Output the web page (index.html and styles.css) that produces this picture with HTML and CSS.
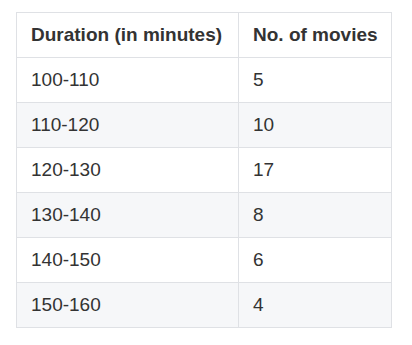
FILE: index.html
```html
<!DOCTYPE html>
<html>
<head>
<meta charset="utf-8">
<link rel="stylesheet" href="styles.css">
</head>
<body>
<table class="data">
  <thead>
    <tr><th>Duration (in minutes)</th><th>No. of movies</th></tr>
  </thead>
  <tbody>
    <tr><td>100-110</td><td>5</td></tr>
    <tr><td>110-120</td><td>10</td></tr>
    <tr><td>120-130</td><td>17</td></tr>
    <tr><td>130-140</td><td>8</td></tr>
    <tr><td>140-150</td><td>6</td></tr>
    <tr><td>150-160</td><td>4</td></tr>
  </tbody>
</table>
</body>
</html>
```
FILE: styles.css
```css
html, body {
  margin: 0;
  padding: 0;
  background: #ffffff;
}
body {
  padding: 12px 16px;
  font-family: "Liberation Sans", Arial, sans-serif;
  font-size: 19px;
  color: #333333;
}
.data {
  border-collapse: collapse;
  width: 376px;
}
.data th,
.data td {
  border: 1px solid #dfe1e5;
  padding: 8px 12px 8px 14px;
  line-height: 28px;
  text-align: left;
  vertical-align: middle;
  white-space: nowrap;
}
.data th {
  font-weight: bold;
}
.data th:first-child {
  width: 195px;
}
.data tbody tr:nth-child(even) {
  background: #f6f7f9;
}
```
